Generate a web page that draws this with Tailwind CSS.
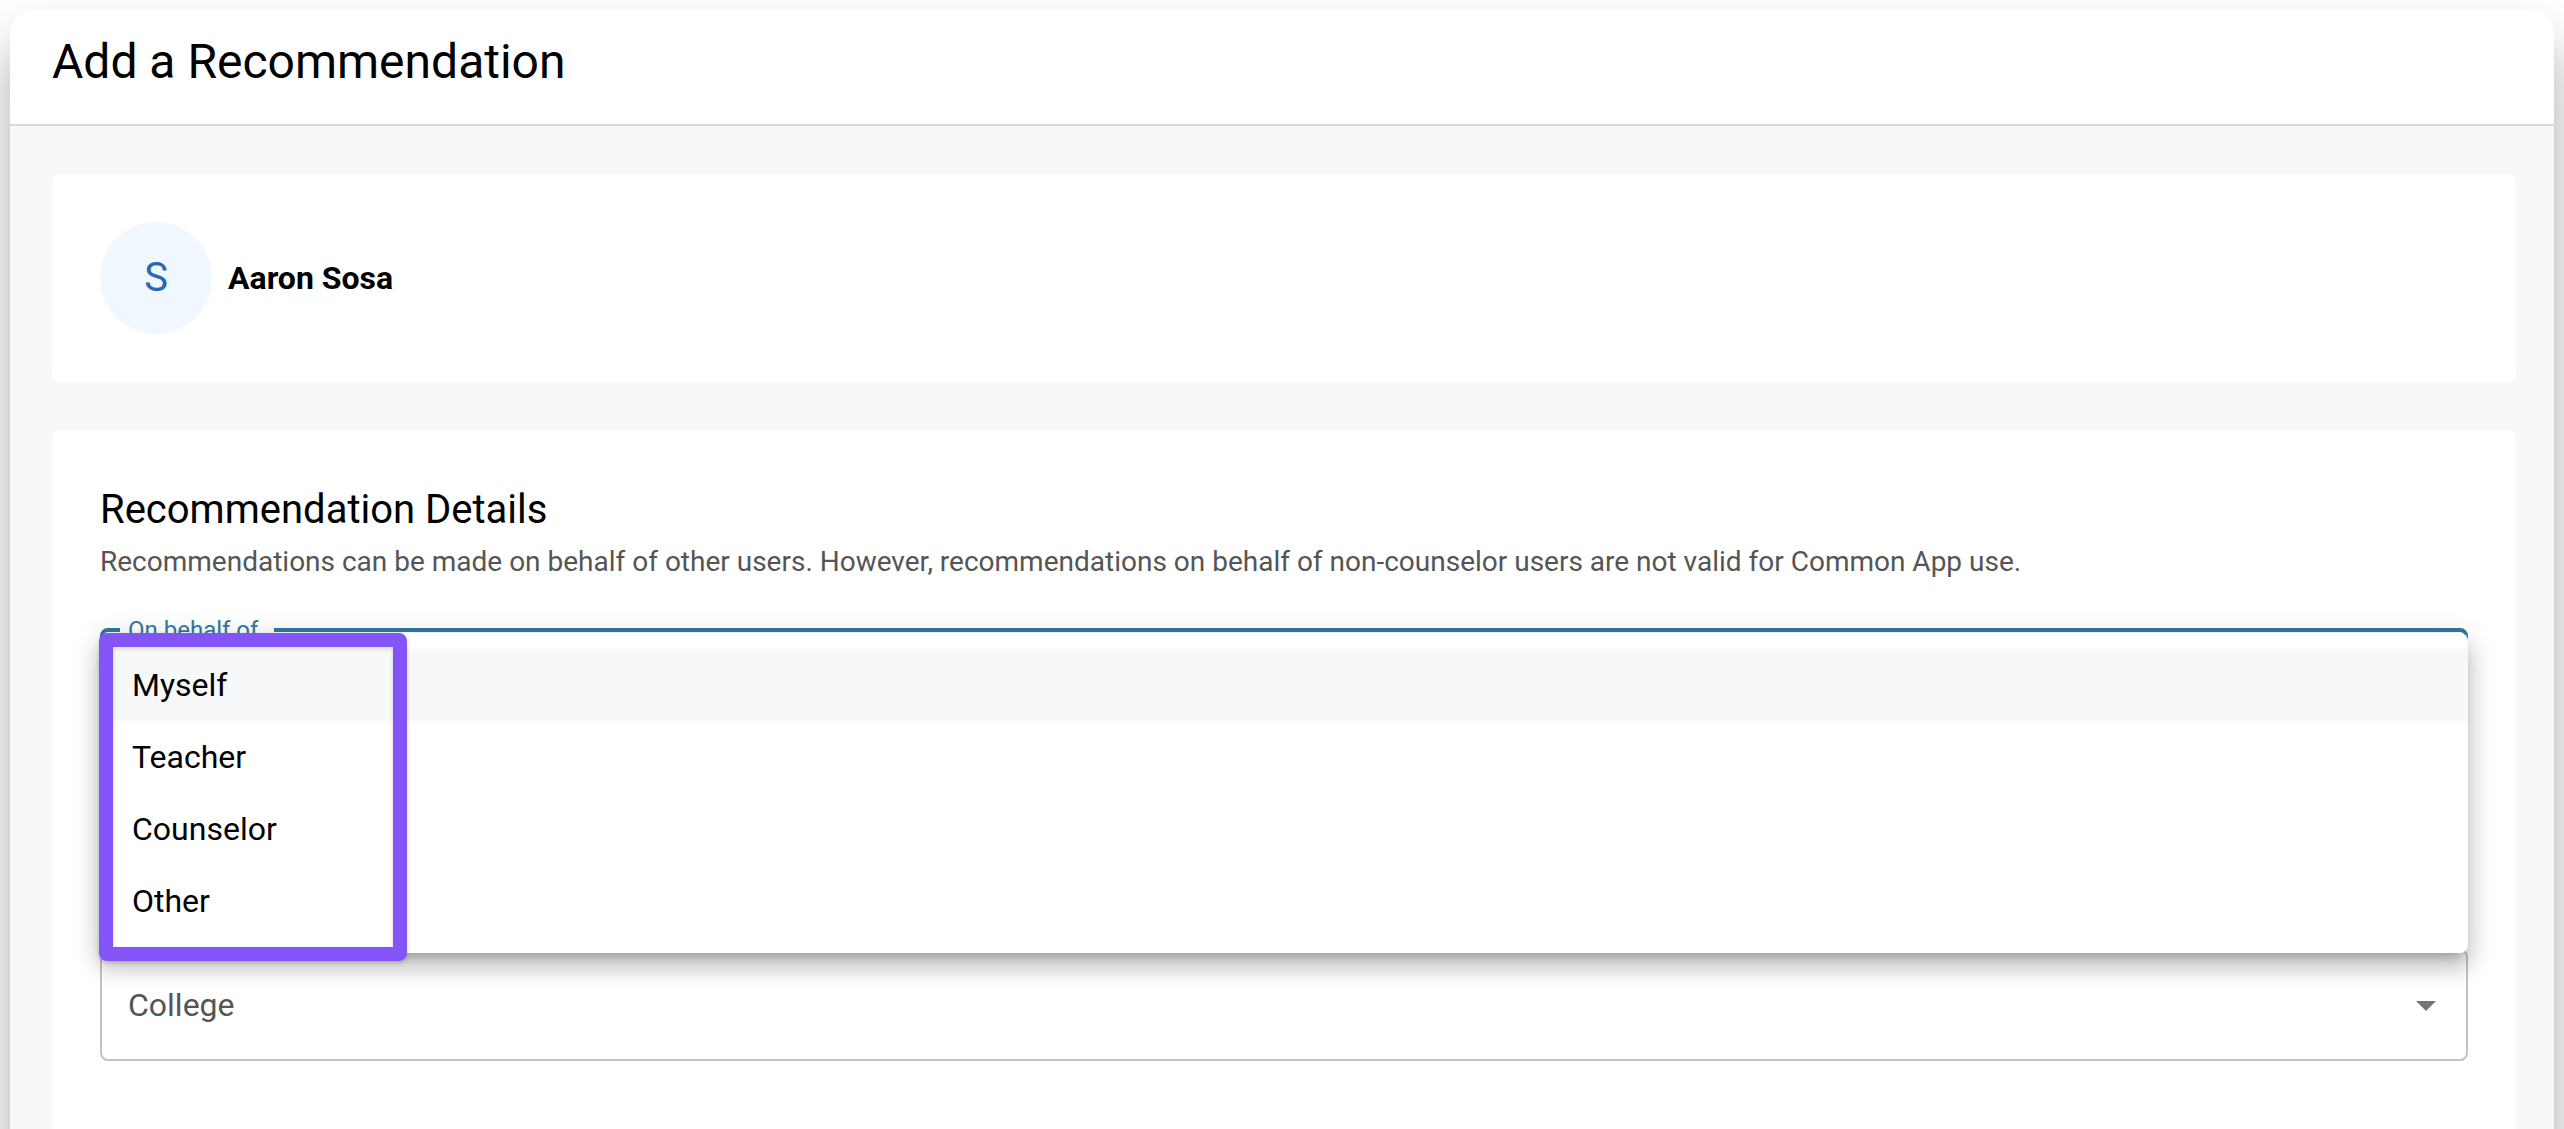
<!DOCTYPE html>
<html lang="en">
<head>
    <meta charset="UTF-8">
    <meta name="viewport" content="width=device-width, initial-scale=1.0">
    <title>Add a Recommendation</title>
    <script src="https://cdn.jsdelivr.net/npm/@tailwindcss/browser@4"></script>
</head>
<body class="bg-white font-['Roboto',sans-serif] text-black">
    <div class="h-screen overflow-hidden p-[10px]">
        <div role="dialog" aria-labelledby="dialog-title" class="rounded-3xl bg-[#f7f8fa] shadow-[0_40px_40px_0_rgba(0,0,0,0.20),0_24px_60px_0_rgba(0,0,0,0.15)]">

            <header class="rounded-t-3xl border-b-2 border-[#d9dadd] bg-white px-[42px] pt-6 pb-[34px]">
                <h1 id="dialog-title" class="text-[48px] leading-[56px]">Add a Recommendation</h1>
            </header>

            <main class="flex flex-col gap-12 pt-12 pr-[38px] pl-[42px]">
                <!-- Student -->
                <section class="flex items-center gap-4 rounded-lg bg-white p-12">
                    <div class="flex size-28 items-center justify-center rounded-full bg-[#f0f7ff] text-[40px] text-[#2a67b7]">S</div>
                    <p class="text-[32px] leading-12 font-bold">Aaron Sosa</p>
                </section>

                <!-- Details -->
                <section class="min-h-screen rounded-lg bg-white p-12">
                    <h2 class="text-[40px] leading-16">Recommendation Details</h2>
                    <p class="text-[28px] leading-10 text-[#555]">Recommendations can be made on behalf of other users. However, recommendations on behalf of non-counselor users are not valid for Common App use.</p>

                    <form class="mt-[34px]">
                        <div class="relative z-10">
                            <fieldset class="rounded-lg border-4 border-[#31789f] px-4">
                                <legend class="pr-4 pl-2 text-[24px] leading-7 text-[#31789f]">On behalf of</legend>
                                <button type="button" aria-haspopup="listbox" aria-expanded="true" aria-label="On behalf of" class="block h-[92px] w-full"></button>
                            </fieldset>

                            <ul role="listbox" aria-label="On behalf of" class="absolute inset-x-0 top-[17px] rounded-lg bg-white py-4 text-[32px] leading-12 shadow-[0_10px_10px_-6px_rgba(0,0,0,0.2),0_16px_20px_2px_rgba(0,0,0,0.14),0_6px_28px_4px_rgba(0,0,0,0.12)]">
                                <li role="option" aria-selected="true" class="bg-[#f7f8fa] px-8 py-3">Myself</li>
                                <li role="option" aria-selected="false" class="px-8 py-3">Teacher</li>
                                <li role="option" aria-selected="false" class="px-8 py-3">Counselor</li>
                                <li role="option" aria-selected="false" class="px-8 py-3">Other</li>
                            </ul>

                            <!-- Highlight around the options -->
                            <div class="pointer-events-none absolute top-[17px] -left-px h-[328px] w-[308px] rounded-lg border-14 border-[#8455f6] drop-shadow-[0_2px_2px_rgba(0,0,0,0.15)]"></div>
                        </div>

                        <div class="relative mt-[209px]">
                            <select id="college" aria-label="College" class="h-28 w-full appearance-none rounded-lg border-2 border-[#c4c4c4] bg-white px-[26px] text-[32px] text-[#555]">
                                <option>College</option>
                            </select>
                            <svg class="pointer-events-none absolute top-8 right-[18px] size-12 fill-[#757575]" viewBox="0 0 24 24" aria-hidden="true">
                                <path d="M7 10l5 5 5-5z"></path>
                            </svg>
                        </div>
                    </form>
                </section>
            </main>
        </div>
    </div>
</body>
</html>
